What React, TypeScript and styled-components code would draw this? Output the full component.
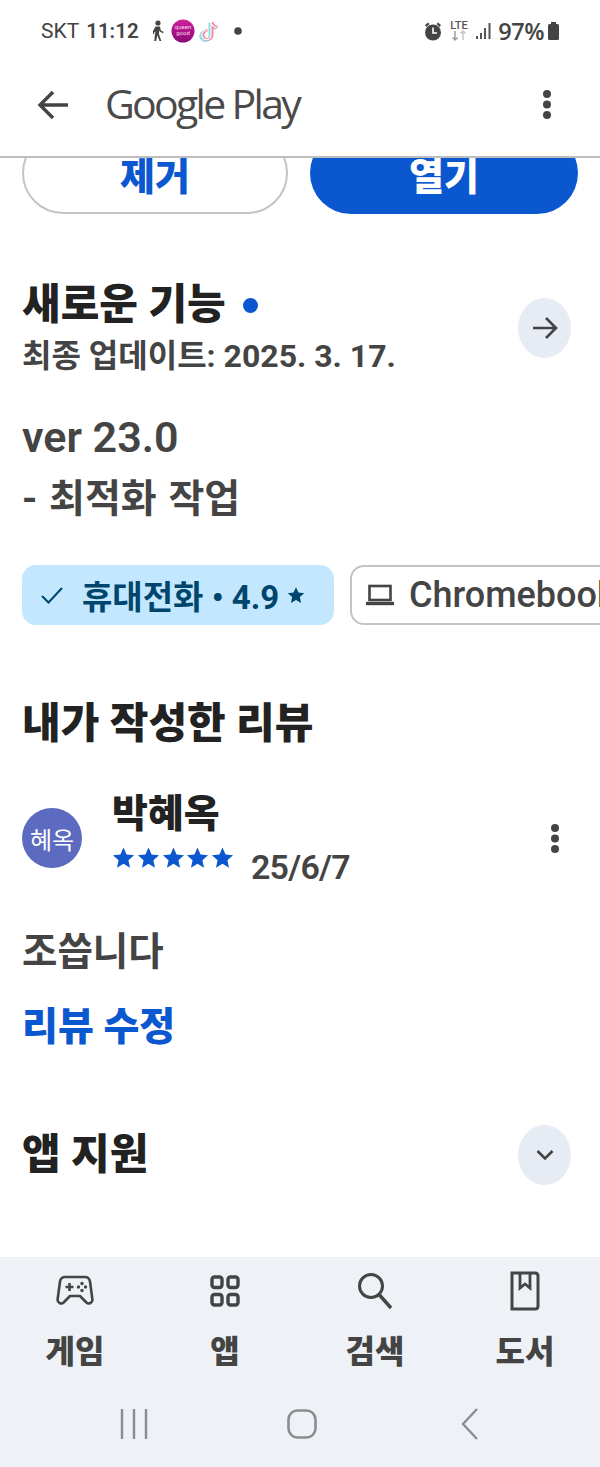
import * as React from 'react';
import styled, { createGlobalStyle } from 'styled-components';

const Global = createGlobalStyle`
  html, body { margin: 0; padding: 0; background: #fff; }
  * { box-sizing: border-box; }
`

const KR = `Roboto, "Noto Sans CJK KR", sans-serif`

const Page = styled.div`
  width: 600px;
  height: 1467px;
  display: flex;
  flex-direction: column;
  overflow: hidden;
  background: #fff;
  font-family: ${KR};
  color: #444;
`

const StatusBar = styled.div`
  height: 62px;
  flex: none;
  display: flex;
  align-items: center;
  justify-content: space-between;
  padding: 0 41px 0 41px;
  color: #444;
`

const StatusGroup = styled.div`
  display: flex;
  align-items: center;
`

const Carrier = styled.span`
  font-size: 21px;
  font-weight: 400;
`

const Clock = styled.span`
  font-size: 20.5px;
  font-weight: 600;
  margin-left: 7px;
  margin-right: 12px;
`

const Battery = styled.span`
  font-size: 23.5px;
  font-weight: 600;
  font-family: "Open Sans", sans-serif;
  letter-spacing: -0.5px;
  margin: 0 4px 0 7px;
`

const AppBar = styled.header`
  height: 96px;
  flex: none;
  display: flex;
  align-items: center;
  padding: 0 49px 9px 37px;
  border-bottom: 2px solid #bdbdbd;
  background: #fff;
  position: relative;
  z-index: 1;
`

const Logo = styled.span`
  font-family: "Open Sans", sans-serif;
  font-size: 41px;
  letter-spacing: -2.7px;
  color: #4a4a4a;
  margin: 0 0 4px 36px;
  flex: 1;
`

const Main = styled.main`
  flex: 1;
  min-height: 0;
  overflow: hidden;
  padding: 0 22px;
`

const ActionRow = styled.div`
  display: flex;
  gap: 22px;
  margin-top: -26px;
`

const ActionButton = styled.div<{ $filled?: boolean }>`
  height: 82px;
  border-radius: 41px;
  width: ${p => (p.$filled ? '268px' : '266px')};
  display: flex;
  align-items: center;
  justify-content: center;
  font-size: 38px;
  font-weight: 900;
  background: ${p => (p.$filled ? '#0b57d0' : '#fff')};
  color: ${p => (p.$filled ? '#fff' : '#0b57d0')};
  border: ${p => (p.$filled ? 'none' : '2px solid #c4c4c4')};
`

const SectionRow = styled.div<{ $top: number }>`
  display: flex;
  align-items: center;
  justify-content: space-between;
  margin-top: ${p => p.$top}px;
  padding-right: 7px;
`

const SectionTitle = styled.h2`
  margin: 0;
  font-size: 42px;
  line-height: 50px;
  font-weight: 900;
  color: #222;
  display: flex;
  align-items: center;
`

const UpdateDot = styled.span`
  width: 15px;
  height: 15px;
  border-radius: 50%;
  background: #0b57d0;
  margin-left: 17px;
`

const Updated = styled.div`
  font-size: 32px;
  line-height: 40px;
  font-weight: 700;
  color: #444;
  margin-top: 6px;
`

const RoundButton = styled.div`
  width: 53px;
  height: 60px;
  border-radius: 50%;
  background: #e7ecf4;
  color: #444;
  display: flex;
  align-items: center;
  justify-content: center;
`

const Version = styled.div`
  font-size: 43px;
  line-height: 50px;
  font-weight: 600;
  margin-top: 36px;
`

const Note = styled.div`
  font-size: 39px;
  line-height: 50px;
  font-weight: 700;
  word-spacing: 2px;
  margin-top: 12px;
`

const ChipRow = styled.div`
  display: flex;
  gap: 16px;
  margin-top: 41px;
  width: 700px;
`

const Chip = styled.div<{ $active?: boolean }>`
  height: 60px;
  flex: none;
  width: ${p => (p.$active ? '312px' : '300px')};
  border-radius: 14px;
  display: flex;
  align-items: center;
  font-size: ${p => (p.$active ? '33px' : '36px')};
  font-weight: ${p => (p.$active ? 700 : 500)};
  padding-left: ${p => (p.$active ? '18px' : '14px')};
  background: ${p => (p.$active ? '#c2e7ff' : '#fff')};
  color: ${p => (p.$active ? '#00456b' : '#444')};
  border: ${p => (p.$active ? 'none' : '2px solid #c4c4c4')};
`

const ChipLabel = styled.span<{ $active?: boolean }>`
  margin-left: ${p => (p.$active ? '18px' : '15px')};
  white-space: nowrap;
`

const ChipStar = styled.span`
  margin-left: 8px;
  display: flex;
`

const ReviewHead = styled.div`
  display: flex;
  align-items: center;
  margin-top: 43px;
`

const Avatar = styled.div`
  width: 60px;
  height: 60px;
  border-radius: 50%;
  background: #5c6bc0;
  color: #fff;
  font-size: 24px;
  display: flex;
  align-items: center;
  justify-content: center;
  flex: none;
  margin-bottom: 3px;
`

const ReviewMeta = styled.div`
  margin-left: 30px;
  flex: 1;
`

const Reviewer = styled.div`
  font-size: 39px;
  line-height: 44px;
  font-weight: 900;
  color: #222;
`

const RatingLine = styled.div`
  display: flex;
  align-items: flex-start;
  margin-top: 8px;
`

const Stars = styled.div`
  display: flex;
  width: 122px;
  justify-content: space-between;
  margin-top: 2px;
`

const ReviewDate = styled.span`
  font-size: 34px;
  line-height: 40px;
  font-weight: 600;
  margin-left: 17px;
  margin-top: 3px;
  letter-spacing: -0.8px;
`

const KebabSlot = styled.span`
  display: flex;
  margin: 0 19px 3px 0;
`

const ReviewBody = styled.div`
  font-size: 38.5px;
  line-height: 50px;
  font-weight: 700;
  margin-top: 40px;
`

const EditLink = styled.div`
  font-size: 39px;
  line-height: 50px;
  font-weight: 900;
  color: #0b57d0;
  margin-top: 25px;
`

const BottomNav = styled.nav`
  flex: none;
  height: 210px;
  background: #eef2f7;
  display: flex;
  flex-direction: column;
`

const Tabs = styled.div`
  display: grid;
  grid-template-columns: repeat(4, 150px);
  height: 130px;
`

const Tab = styled.div`
  display: flex;
  flex-direction: column;
  align-items: center;
  padding-top: 12px;
`

const TabIcon = styled.div`
  height: 44px;
  display: flex;
  align-items: center;
  justify-content: center;
`

const TabLabel = styled.span`
  font-size: 32px;
  line-height: 40px;
  font-weight: 900;
  margin-top: 19px;
`

const SystemBar = styled.div`
  flex: 1;
  display: grid;
  grid-template-columns: repeat(3, 168px);
  justify-items: center;
  align-items: center;
  padding: 0 0 6px 50px;
  color: #8a8d90;
`

const Back = () => (
  <svg width="32" height="30" viewBox="0 0 32 30" fill="none" stroke="#444" strokeWidth="3.4">
    <path d="M31 15H3M16 2 3 15l13 13" />
  </svg>
)

const Kebab = () => (
  <svg width="8" height="29" viewBox="0 0 8 29" fill="#444">
    <circle cx="4" cy="4" r="4" />
    <circle cx="4" cy="14.5" r="4" />
    <circle cx="4" cy="25" r="4" />
  </svg>
)

const Star = ({ size, color }: { size: number; color: string }) => (
  <svg width={size} height={size} viewBox="0 0 24 24" fill={color}>
    <path d="M12 1.5l3.2 7.3 7.8.8-5.9 5.2 1.7 7.8L12 18.5l-6.8 4.1 1.7-7.8L1 9.6l7.8-.8z" />
  </svg>
)

const StatusIcons = () => (
  <>
    <svg width="14" height="22" viewBox="0 0 14 22" fill="#444">
      <circle cx="7" cy="3" r="2.6" />
      <path d="M4.5 6.5h4.4l1 4 2.8 1.6-.7 1.2-3.3-1.8-.5-1.4-.3 3.6 2.4 7.2H8.5l-2-5.6L5 21H3.2l1.2-9.5-1.200.8V14H2v-3z" />
    </svg>
    <svg width="24" height="24" viewBox="0 0 24 24" style={{ marginLeft: 6 }}>
      <defs>
        <linearGradient id="pink" x1="0" y1="0" x2="0" y2="1">
          <stop offset="0" stopColor="#d0209a" />
          <stop offset="1" stopColor="#8a0a78" />
        </linearGradient>
      </defs>
      <circle cx="12" cy="12" r="11.5" fill="url(#pink)" />
      <text x="12" y="10" fontSize="6" fill="#f4d9ef" textAnchor="middle" fontFamily="Roboto">queen</text>
      <text x="12" y="16" fontSize="6" fill="#f4d9ef" textAnchor="middle" fontFamily="Roboto">good</text>
    </svg>
    <svg width="22" height="24" viewBox="0 0 22 24" fill="none" strokeWidth="3" style={{ marginLeft: 3 }}>
      <path d="M13 3v13a4.6 4.6 0 1 1-4.6-4.6M13 3c.4 3 2.6 5 5.6 5.3" stroke="#7fe3e8" transform="translate(-1 1)" />
      <path d="M13 3v13a4.6 4.6 0 1 1-4.6-4.6M13 3c.4 3 2.6 5 5.6 5.3" stroke="#f48aa6" transform="translate(1 0)" />
      <path d="M13 3v13a4.6 4.6 0 1 1-4.6-4.6M13 3c.4 3 2.6 5 5.6 5.3" stroke="#fff" strokeWidth="1.2" />
    </svg>
    <svg width="8" height="8" viewBox="0 0 8 8" fill="#444" style={{ marginLeft: 14 }}>
      <circle cx="4" cy="4" r="3.8" />
    </svg>
  </>
)

const SystemIcons = () => (
  <>
    <svg width="18" height="19" viewBox="0 0 18 19" fill="#444">
      <circle cx="9" cy="10.5" r="8" />
      <path d="M1 3l3-2.5L5.5 2 2.5 5zM17 3l-3-2.5L12.5 2l3 3z" />
      <path d="M9 5.5V11h4" fill="none" stroke="#fff" strokeWidth="1.6" />
    </svg>
    <svg width="20" height="24" viewBox="0 0 20 24" style={{ marginLeft: 7 }}>
      <text x="10" y="10" fontSize="11" fontWeight="500" textAnchor="middle" fill="#555" fontFamily="Roboto">LTE</text>
      <path d="M6 12v9M3.5 18.5 6 21l2.5-2.5" stroke="#999" strokeWidth="1.4" fill="none" />
      <path d="M14 21v-9M11.5 14.5 14 12l2.5 2.5" stroke="#c4c4c4" strokeWidth="1.4" fill="none" />
    </svg>
    <svg width="15" height="17" viewBox="0 0 15 17" fill="#555" style={{ marginLeft: 7 }}>
      <rect x="0" y="13" width="2" height="3" />
      <rect x="4" y="10" width="2" height="6" />
      <rect x="8" y="5" width="2" height="11" />
      <rect x="12.5" y="0" width="2" height="16" />
    </svg>
    <Battery>97%</Battery>
    <svg width="11" height="18" viewBox="0 0 11 18" fill="#444">
      <rect x="3" y="0" width="5" height="3" />
      <rect x="0" y="2" width="11" height="16" rx="1.6" />
    </svg>
  </>
)

const GameIcon = () => (
  <svg width="38" height="32" viewBox="0 0 38 32" fill="none" stroke="#444" strokeWidth="2.6" strokeLinejoin="round">
    <path d="M9 2h20c3 0 4.5 1.8 5 4.5l2.4 18c.4 3.2-3.6 5.2-6 3L24 21H14l-6.4 6.5c-2.4 2.2-6.4.2-6-3L4 6.5C4.5 3.800 6 2 9 2z" />
    <path d="M9.5 12h8M13.5 8v8" />
    <g fill="#444" stroke="none">
      <circle cx="26" cy="8.5" r="1.7" />
      <circle cx="26" cy="15.5" r="1.7" />
      <circle cx="22.5" cy="12" r="1.7" />
      <circle cx="29.5" cy="12" r="1.7" />
    </g>
  </svg>
)

const AppsIcon = () => (
  <svg width="30" height="32" viewBox="0 0 30 32" fill="none" stroke="#444" strokeWidth="3.4">
    <rect x="2" y="2" width="10" height="10.5" rx="2.5" />
    <rect x="18" y="2" width="10" height="10.5" rx="2.5" />
    <rect x="2" y="19.5" width="10" height="10.5" rx="2.5" />
    <rect x="18" y="19.5" width="10" height="10.5" rx="2.5" />
  </svg>
)

const SearchIcon = () => (
  <svg width="36" height="38" viewBox="0 0 36 38" fill="none" stroke="#444" strokeWidth="3">
    <circle cx="14" cy="14" r="11.5" />
    <path d="M22.5 23 34 36" strokeWidth="3.4" />
  </svg>
)

const BookIcon = () => (
  <svg width="30" height="40" viewBox="0 0 30 40" fill="none" stroke="#444" strokeWidth="3">
    <path d="M2 2h23c1.8 0 3 1.2 3 3v30c0 1.8-1.2 3-3 3H2z" />
    <path d="M10 2v15l5-4 5 4V2" strokeWidth="2.8" />
  </svg>
)

const tabs = [
  { label: '게임', icon: <GameIcon /> },
  { label: '앱', icon: <AppsIcon /> },
  { label: '검색', icon: <SearchIcon /> },
  { label: '도서', icon: <BookIcon /> },
]

export default function App() {
  return (
    <Page>
      <Global />
      <StatusBar>
        <StatusGroup>
          <Carrier>SKT</Carrier>
          <Clock>11:12</Clock>
          <StatusIcons />
        </StatusGroup>
        <StatusGroup>
          <SystemIcons />
        </StatusGroup>
      </StatusBar>

      <AppBar>
        <Back />
        <Logo>Google Play</Logo>
        <Kebab />
      </AppBar>

      <Main>
        <ActionRow>
          <ActionButton>제거</ActionButton>
          <ActionButton $filled>열기</ActionButton>
        </ActionRow>

        <SectionRow $top={66}>
          <div>
            <SectionTitle>새로운 기능<UpdateDot /></SectionTitle>
            <Updated>최종 업데이트: 2025. 3. 17.</Updated>
          </div>
          <RoundButton>
            <svg width="26" height="26" viewBox="0 0 26 26" fill="none" stroke="#444" strokeWidth="2.6">
              <path d="M1 13h23M14 3l10 10-10 10" />
            </svg>
          </RoundButton>
        </SectionRow>

        <Version>ver 23.0</Version>
        <Note>- 최적화 작업</Note>

        <ChipRow>
          <Chip $active>
            <svg width="24" height="20" viewBox="0 0 24 20" fill="none" stroke="#00456b" strokeWidth="2">
              <path d="M2 11l6.5 6.5L22 3" />
            </svg>
            <ChipLabel $active>휴대전화 • 4.9</ChipLabel>
            <ChipStar><Star size={18} color="#00456b" /></ChipStar>
          </Chip>
          <Chip>
            <svg width="28" height="22" viewBox="0 0 28 22" fill="none" stroke="#444" strokeWidth="2.6">
              <rect x="3.5" y="2" width="21" height="14" />
              <path d="M0 19.5h28" strokeWidth="3.4" />
            </svg>
            <ChipLabel>Chromebook</ChipLabel>
          </Chip>
        </ChipRow>

        <SectionRow $top={74}>
          <SectionTitle>내가 작성한 리뷰</SectionTitle>
        </SectionRow>

        <ReviewHead>
          <Avatar>혜옥</Avatar>
          <ReviewMeta>
            <Reviewer>박혜옥</Reviewer>
            <RatingLine>
              <Stars>
                {[0, 1, 2, 3, 4].map(i => <Star key={i} size={23} color="#0b57d0" />)}
              </Stars>
              <ReviewDate>25/6/7</ReviewDate>
            </RatingLine>
          </ReviewMeta>
          <KebabSlot><Kebab /></KebabSlot>
        </ReviewHead>

        <ReviewBody>조씁니다</ReviewBody>
        <EditLink>리뷰 수정</EditLink>

        <SectionRow $top={73}>
          <SectionTitle>앱 지원</SectionTitle>
          <RoundButton>
            <svg width="18" height="12" viewBox="0 0 18 12" fill="none" stroke="#444" strokeWidth="2.6">
              <path d="M1.5 2 9 9.5 16.5 2" />
            </svg>
          </RoundButton>
        </SectionRow>
      </Main>

      <BottomNav>
        <Tabs>
          {tabs.map(t => (
            <Tab key={t.label}>
              <TabIcon>{t.icon}</TabIcon>
              <TabLabel>{t.label}</TabLabel>
            </Tab>
          ))}
        </Tabs>
        <SystemBar>
          <svg width="28" height="30" viewBox="0 0 28 30" stroke="currentColor" strokeWidth="2.4">
            <path d="M2 0v30M14 0v30M26 0v30" />
          </svg>
          <svg width="30" height="30" viewBox="0 0 30 30" fill="none" stroke="currentColor" strokeWidth="2.6">
            <rect x="1.5" y="1.5" width="27" height="27" rx="9" />
          </svg>
          <svg width="18" height="32" viewBox="0 0 18 32" fill="none" stroke="currentColor" strokeWidth="2.4">
            <path d="M16 1 2 16l14 15" />
          </svg>
        </SystemBar>
      </BottomNav>
    </Page>
  )
}
